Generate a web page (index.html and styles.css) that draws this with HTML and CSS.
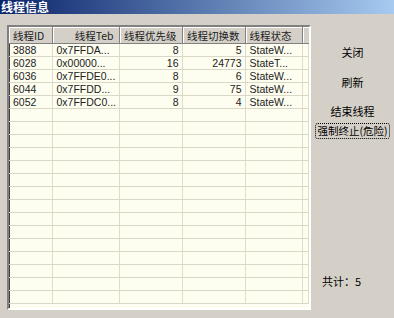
FILE: index.html
```html
<!DOCTYPE html>
<html lang="zh-CN">
<head>
    <meta charset="UTF-8">
    <title>线程信息</title>
    <link rel="stylesheet" href="styles.css">
</head>
<body>
    <div class="titlebar"><span class="caption">线程信息</span></div>

    <div class="content">
        <!-- Thread list -->
        <div class="listbox">
            <table class="grid">
                <colgroup>
                    <col class="c-id">
                    <col class="c-teb">
                    <col class="c-pri">
                    <col class="c-sw">
                    <col class="c-state">
                    <col>
                </colgroup>
                <thead>
                    <tr>
                        <th class="left">线程ID</th>
                        <th>线程Teb</th>
                        <th>线程优先级</th>
                        <th>线程切换数</th>
                        <th class="left">线程状态</th>
                        <th class="blank"></th>
                    </tr>
                </thead>
                <tbody id="rows"></tbody>
            </table>
        </div>

        <!-- Side buttons -->
        <div class="side">
            <div class="btn b-close">关闭</div>
            <div class="btn b-refresh">刷新</div>
            <div class="btn b-end">结束线程</div>
            <div class="btn b-kill"><span class="focus">强制终止(危险)</span></div>
            <div class="total">共计：5</div>
        </div>
    </div>

    <script>
        const threads = [
            ['3888', '0x7FFDA...', '8', '5', 'StateW...'],
            ['6028', '0x00000...', '16', '24773', 'StateT...'],
            ['6036', '0x7FFDE0...', '8', '6', 'StateW...'],
            ['6044', '0x7FFDD...', '9', '75', 'StateW...'],
            ['6052', '0x7FFDC0...', '8', '4', 'StateW...']
        ];
        const rows = document.getElementById('rows');

        // Fill data rows, then pad the grid with empty lines
        for (let i = 0; i < 20; i++) {
            const tr = document.createElement('tr');
            const t = threads[i] || ['', '', '', '', ''];
            t.forEach((val, j) => {
                const td = document.createElement('td');
                td.textContent = val;
                if (j === 2 || j === 3) td.className = 'num';
                tr.appendChild(td);
            });
            tr.appendChild(document.createElement('td'));
            rows.appendChild(tr);
        }
    </script>
</body>
</html>
```

FILE: styles.css
```css
html, body {
    margin: 0;
    height: 100%;
}
body {
    background-color: #d4d0c8;
    font-family: "Liberation Sans", "Noto Sans CJK SC", sans-serif;
    font-size: 10.5px;
    color: #000;
    overflow: hidden;
    display: flex;
    flex-direction: column;
}

/* Window caption */
.titlebar {
    height: 14px;
    flex-shrink: 0;
    display: flex;
    align-items: center;
    background: linear-gradient(to right, #0a246a, #a6caf0);
    padding-left: 1px;
}
.caption {
    color: #fff;
    font-family: "Noto Sans CJK SC", sans-serif;
    font-weight: bold;
    font-size: 12px;
    line-height: 12px;
}

.content {
    display: flex;
    flex: 1;
    padding: 11px 0 8px 7px;
}

/* Sunken list box */
.listbox {
    width: 300px;
    height: 281px;
    border: 2px solid;
    border-color: #808080 #ffffff #ffffff #808080;
    box-shadow: inset 1px 1px 0 #404040;
    background-color: #fefef0;
    overflow: hidden;
    flex-shrink: 0;
}
.grid {
    border-collapse: collapse;
    table-layout: fixed;
    width: 300px;
}
.c-id { width: 43px; }
.c-teb { width: 67px; }
.c-pri { width: 63px; }
.c-sw { width: 63px; }
.c-state { width: 57px; }

.grid th {
    height: 16px;
    padding: 0 5px 0 4px;
    background-color: #d4d0c8;
    font-family: "Noto Sans CJK SC", sans-serif;
    font-weight: normal;
    font-size: 10.5px;
    color: #222;
    text-align: right;
    white-space: nowrap;
    overflow: hidden;
    border-right: 1px solid #808080;
    border-bottom: 1px solid #808080;
    box-shadow: inset 1px 1px 0 #ffffff;
}
.grid th.left {
    text-align: left;
}
.grid th.blank {
    border-right: none;
}
.grid td {
    height: 12px;
    padding: 0 3px 0 4px;
    line-height: 12px;
    white-space: nowrap;
    overflow: hidden;
    color: #222;
    border-right: 1px solid #dedccb;
    border-bottom: 1px solid #d9d8c6;
}
.grid td.num {
    text-align: right;
}

/* Right column with flat buttons */
.side {
    flex: 1;
    display: flex;
    flex-direction: column;
    align-items: center;
    font-family: "Noto Sans CJK SC", sans-serif;
    font-size: 11px;
}
.btn {
    line-height: 14px;
}
.b-close { margin-top: 20px; }
.b-refresh { margin-top: 16px; }
.b-end { margin-top: 15px; }
.b-kill { margin-top: 5px; }
.focus {
    display: inline-block;
    padding: 0 1px;
    border: 1px dotted #000;
    border-radius: 3px;
    font-size: 10.5px;
}
.total {
    align-self: flex-start;
    margin-top: auto;
    margin-bottom: 21px;
    margin-left: 11px;
}
```
